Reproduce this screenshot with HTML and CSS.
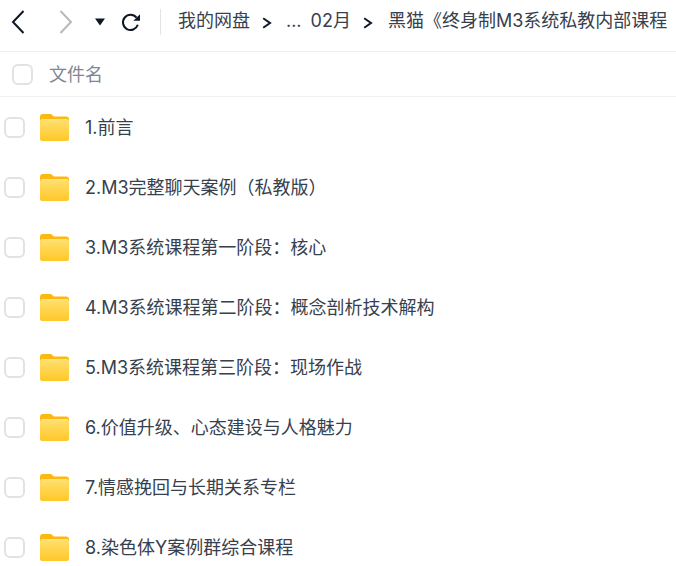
FILE: index.html
```html
<!DOCTYPE html>
<html lang="zh">
<head>
<meta charset="utf-8">
<title>文件列表</title>
<link rel="stylesheet" href="styles.css">
</head>
<body>
<header class="toolbar">
  <div class="nav">
    <svg class="icon back" width="16" height="26" viewBox="0 0 16 26"><path d="M13.500 2 3 13l10.500 11" fill="none" stroke="#0d1726" stroke-width="2"/></svg>
    <svg class="icon forward" width="16" height="26" viewBox="0 0 16 26"><path d="M2.500 2 13 13 2.500 24" fill="none" stroke="#b9b9b9" stroke-width="2"/></svg>
    <svg class="icon drop" width="10" height="8" viewBox="0 0 10 8"><path d="M0 .5h10L5 7.500z" fill="#0d1726"/></svg>
    <svg class="icon reload" width="20" height="20" viewBox="0 0 20 20"><path d="M16.800 12.800a7.600 7.600 0 1 1-1.300-7.200" fill="none" stroke="#0d1726" stroke-width="2"/><path d="M19 2.200v6.600h-6.600z" fill="#0d1726"/></svg>
  </div>
  <nav class="crumbs">
    <span>我的网盘</span>
    <svg class="sep" width="10" height="12" viewBox="0 0 10 12"><path d="M1.200 1.300 8 6l-6.800 4.700" fill="none" stroke="#0d1726" stroke-width="2"/></svg>
    <span class="dots">...</span>
    <span>02月</span>
    <svg class="sep" width="10" height="12" viewBox="0 0 10 12"><path d="M1.200 1.300 8 6l-6.800 4.700" fill="none" stroke="#0d1726" stroke-width="2"/></svg>
    <span class="last">黑猫《终身制M3系统私教内部课程</span>
  </nav>
</header>
<div class="head-row">
  <span class="check"></span>
  <span class="head-label">文件名</span>
</div>
<ul class="list">
  <li class="row"><span class="check"></span><svg class="folder" width="29" height="27" viewBox="0 0 29 27"><use href="#f"/></svg><span class="name">1.前言</span></li>
  <li class="row"><span class="check"></span><svg class="folder" width="29" height="27" viewBox="0 0 29 27"><use href="#f"/></svg><span class="name">2.M3完整聊天案例（私教版）</span></li>
  <li class="row"><span class="check"></span><svg class="folder" width="29" height="27" viewBox="0 0 29 27"><use href="#f"/></svg><span class="name">3.M3系统课程第一阶段：核心</span></li>
  <li class="row"><span class="check"></span><svg class="folder" width="29" height="27" viewBox="0 0 29 27"><use href="#f"/></svg><span class="name">4.M3系统课程第二阶段：概念剖析技术解构</span></li>
  <li class="row"><span class="check"></span><svg class="folder" width="29" height="27" viewBox="0 0 29 27"><use href="#f"/></svg><span class="name">5.M3系统课程第三阶段：现场作战</span></li>
  <li class="row"><span class="check"></span><svg class="folder" width="29" height="27" viewBox="0 0 29 27"><use href="#f"/></svg><span class="name">6.价值升级、心态建设与人格魅力</span></li>
  <li class="row"><span class="check"></span><svg class="folder" width="29" height="27" viewBox="0 0 29 27"><use href="#f"/></svg><span class="name">7.情感挽回与长期关系专栏</span></li>
  <li class="row"><span class="check"></span><svg class="folder" width="29" height="27" viewBox="0 0 29 27"><use href="#f"/></svg><span class="name">8.染色体Y案例群综合课程</span></li>
</ul>
<svg class="defs" width="0" height="0">
  <defs>
    <linearGradient id="g" x1="0" y1="0" x2="0" y2="1"><stop offset="0" stop-color="#ffe88c"/><stop offset=".12" stop-color="#ffdd66"/><stop offset="1" stop-color="#ffc82a"/></linearGradient>
    <symbol id="f" viewBox="0 0 29 27">
      <path d="M0 3a3 3 0 0 1 3-3h8l3 2.500h12a3 3 0 0 1 3 3V12H0z" fill="#ffb80f"/>
      <rect x="0" y="4" width="29" height="23" rx="3" fill="#ffb80f"/>
      <rect x="0" y="5" width="29" height="22" rx="3" fill="url(#g)"/>
    </symbol>
  </defs>
</svg>
</body>
</html>
```
FILE: styles.css
```css
* { box-sizing: border-box; }
html, body { margin: 0; padding: 0; background: #fff; overflow: hidden; }
body {
  width: 676px;
  height: 566px;
  font-family: Inter, "Noto Sans CJK SC", sans-serif;
  font-size: 18px;
  line-height: 26px;
  color: #37404d;
}
.toolbar {
  height: 52px;
  display: flex;
  align-items: center;
  border-bottom: 1px solid #eeeeee;
  padding-bottom: 7px;
}
.nav {
  width: 161px;
  height: 26px;
  flex: none;
  display: flex;
  align-items: center;
  border-right: 1px solid #e4e4e4;
  padding-left: 10px;
}
.icon { display: block; flex: none; }
.forward { margin-left: 32px; }
.drop { margin-left: 21px; }
.reload { margin-left: 16px; }
.crumbs {
  display: flex;
  align-items: center;
  padding: 2px 0 0 17px;
  white-space: nowrap;
  margin-top: -4px;
}
.sep { margin: 3px 13px 0 12px; flex: none; }
.dots { margin: 0 9px 0 1px; }
.last { margin-left: 2px; }
.head-row {
  height: 45px;
  display: flex;
  align-items: center;
  border-bottom: 1px solid #f2f2f2;
  padding-left: 12px;
}
.head-label { margin-left: 16px; padding-top: 2px; color: #7f8794; }
.check {
  display: block;
  flex: none;
  width: 21px;
  height: 21px;
  border: 2px solid #e2e2e2;
  border-radius: 6px;
  background: #fff;
}
.list { list-style: none; margin: 0; padding: 0; }
.row {
  height: 60px;
  display: flex;
  align-items: center;
  padding-left: 4px;
}
.folder { margin-left: 15px; flex: none; }
.name { margin-left: 16px; padding-top: 2px; white-space: nowrap; }
.defs { position: absolute; }
```
